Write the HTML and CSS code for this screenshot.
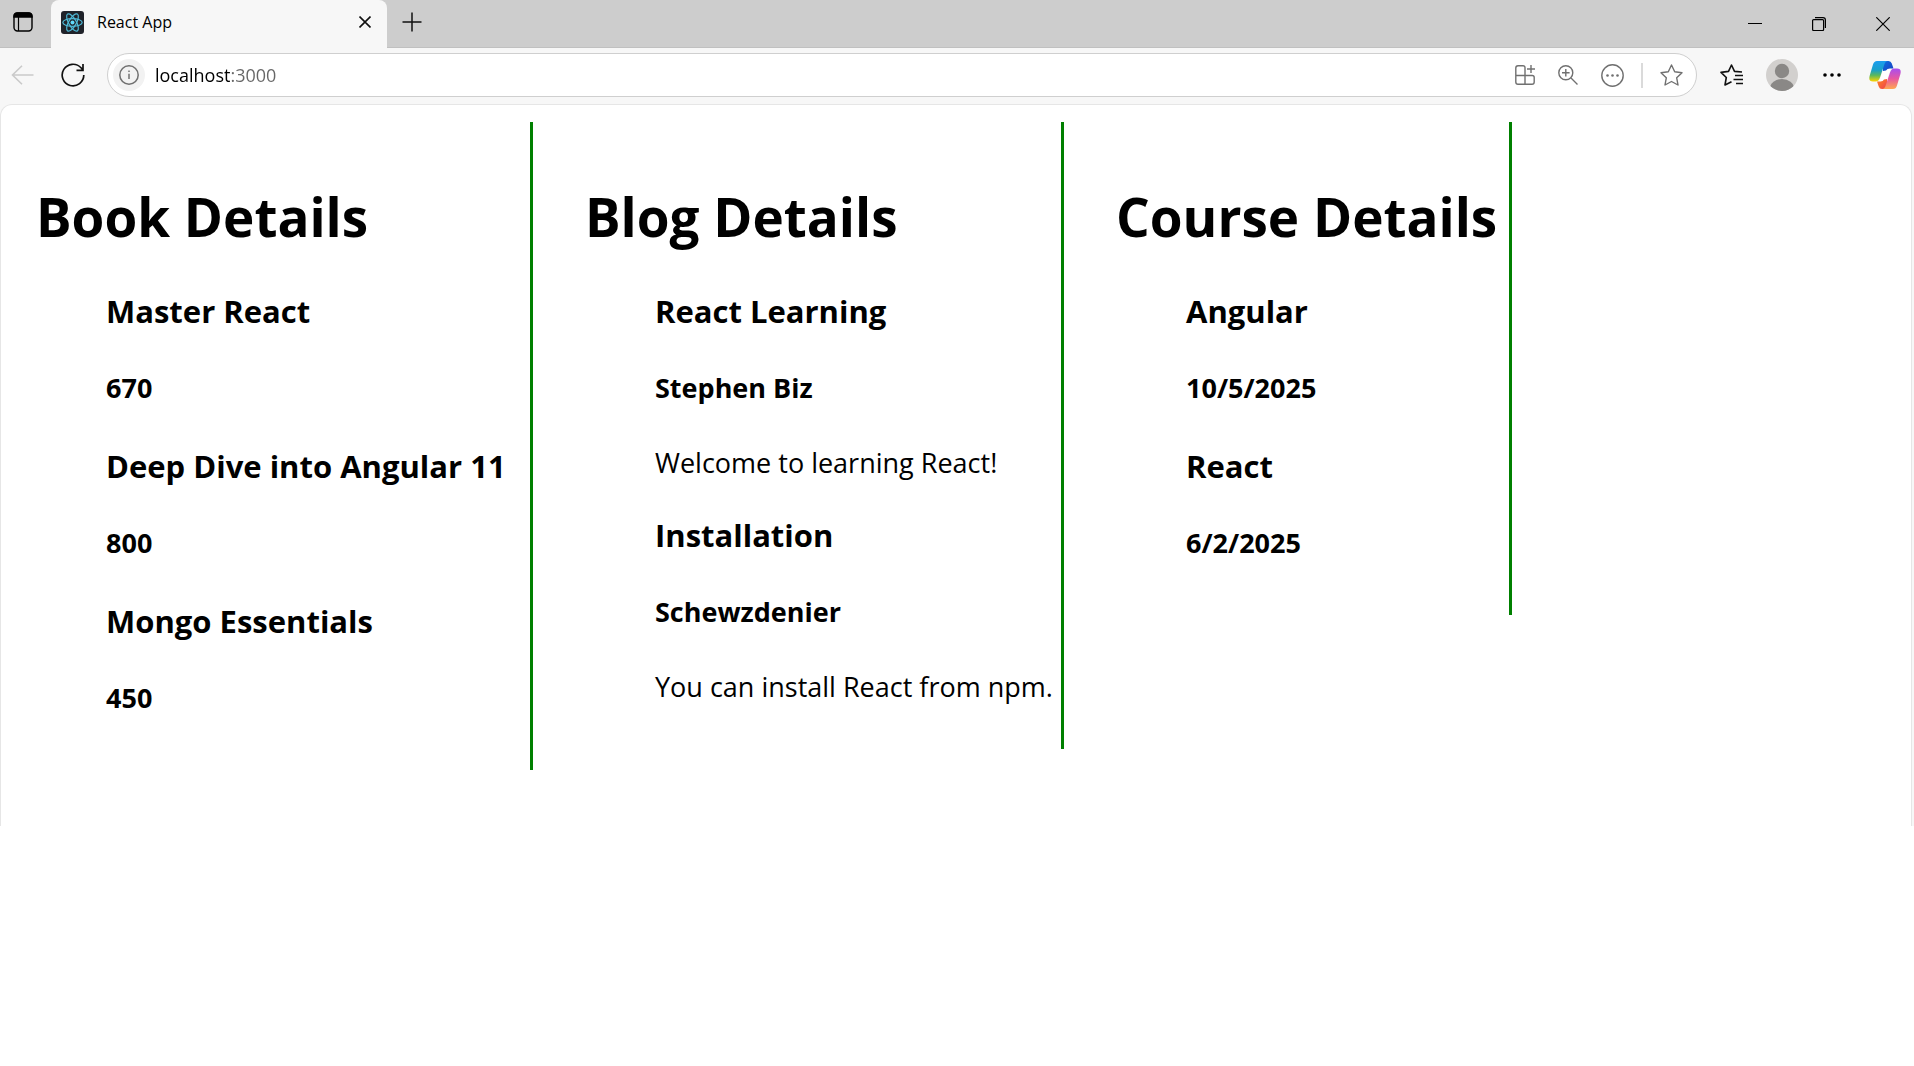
FILE: index.html
```html
<!DOCTYPE html>
<html lang="en">
<head>
<meta charset="utf-8">
<title>React App</title>
<link rel="stylesheet" href="styles.css">
</head>
<body>
<div class="browser">
  <header class="titlebar">
    <button class="icon-button workspace" type="button" aria-label="Tab actions">
      <svg width="20" height="20" viewBox="0 0 20 20" fill="none" stroke="#000" stroke-width="1.4"><rect x="1" y="1" width="18" height="18" rx="3.5"/><path d="M1 5V4.500Q1 1 4.500 1h11Q19 1 19 4.500V5H1z" fill="#000"/><path d="M5.500 5v14" stroke-width="1.200"/></svg>
    </button>
    <div class="tab">
      <svg class="favicon" width="23" height="23" viewBox="0 0 23 23"><rect width="23" height="23" rx="3" fill="#20232a"/><g fill="none" stroke="#4fb9d6" stroke-width="1.200"><ellipse cx="11.500" cy="11.500" rx="9.700" ry="3.800"/><ellipse cx="11.500" cy="11.500" rx="9.700" ry="3.800" transform="rotate(60 11.500 11.500)"/><ellipse cx="11.500" cy="11.500" rx="9.700" ry="3.800" transform="rotate(120 11.500 11.500)"/></g><circle cx="11.500" cy="11.500" r="2" fill="#61dafb"/></svg>
      <span class="tab-title">React App</span>
      <button class="icon-button" type="button" aria-label="Close tab">
        <svg width="12" height="12" viewBox="0 0 12 12" stroke="#111" stroke-width="1.600"><path d="M.5.5l11 11M11.500.5l-11 11"/></svg>
      </button>
    </div>
    <button class="icon-button new-tab" type="button" aria-label="New tab">
      <svg width="20" height="20" viewBox="0 0 20 20" stroke="#111" stroke-width="1.500"><path d="M10 .5v19M.5 10h19"/></svg>
    </button>
    <div class="window-controls">
      <button class="icon-button" type="button" aria-label="Minimize">
        <svg width="14" height="14" viewBox="0 0 14 14" stroke="#000"><path d="M0 6.500h14"/></svg>
      </button>
      <button class="icon-button" type="button" aria-label="Restore">
        <svg width="14" height="14" viewBox="0 0 14 14" fill="none" stroke="#000" stroke-width="1.200"><rect x=".6" y="2.600" width="11" height="11" rx="1"/><path d="M3 .6h8q2.400 0 2.400 2.400v8"/></svg>
      </button>
      <button class="icon-button" type="button" aria-label="Close window">
        <svg width="14" height="14" viewBox="0 0 14 14" stroke="#000" stroke-width="1.200"><path d="M.3.3l13.400 13.400M13.700.3L.3 13.700"/></svg>
      </button>
    </div>
  </header>

  <nav class="toolbar" aria-label="Browser toolbar">
    <button class="icon-button back" type="button" aria-label="Back" disabled>
      <svg width="23" height="20" viewBox="0 0 23 20" fill="none" stroke="#cacaca" stroke-width="1.600"><path d="M11 .8L1.500 10l9.500 9.200M1.500 10H22.500"/></svg>
    </button>
    <button class="icon-button reload" type="button" aria-label="Refresh">
      <svg width="24" height="24" viewBox="0 0 24 24" fill="none" stroke="#111" stroke-width="1.700"><path d="M22.800 12A10.800 10.800 0 1 1 20 4.800L22 7M22 1v6.300h-6.500"/></svg>
    </button>
    <form class="address">
      <button class="icon-button site-info" type="button" aria-label="Site information">
        <svg width="20" height="20" viewBox="0 0 20 20" fill="none" stroke="#707070" stroke-width="1.500"><circle cx="10" cy="10" r="9.200"/><path d="M10 8.800V14"/><circle cx="10" cy="6.200" r=".5" fill="#707070" stroke-width=".8"/></svg>
      </button>
      <input class="url" type="text" aria-label="Address" value="localhost:3000">
      <button class="icon-button" type="button" aria-label="Install app">
        <svg width="20" height="20" viewBox="0 0 20 20" fill="none" stroke="#707070" stroke-width="1.400"><path d="M10 10.500V2.800q0-2-2-2H3Q.8.8.8 3v14Q.8 19.200 3 19.200h14q2.200 0 2.200-2.200v-4.500q0-2-2-2H.8M10 10.500v8.700M16 0v8M12 4h8"/></svg>
      </button>
      <button class="icon-button" type="button" aria-label="Zoom">
        <svg width="20" height="20" viewBox="0 0 20 20" fill="none" stroke="#707070" stroke-width="1.400"><circle cx="7.800" cy="7.800" r="7"/><path d="M13 13l6.500 6.500M7.800 4v7.600M4 7.800h7.600"/></svg>
      </button>
      <button class="icon-button" type="button" aria-label="More page actions">
        <svg width="23" height="23" viewBox="0 0 23 23" fill="none" stroke="#707070" stroke-width="1.400"><circle cx="11.500" cy="11.500" r="10.700"/><g fill="#707070" stroke="none"><circle cx="6.500" cy="11.500" r="1.300"/><circle cx="11.500" cy="11.500" r="1.300"/><circle cx="16.500" cy="11.500" r="1.300"/></g></svg>
      </button>
      <span class="divider"></span>
      <button class="icon-button" type="button" aria-label="Add to favorites">
        <svg width="23" height="22" viewBox="0 0 23 22" fill="none" stroke="#707070" stroke-width="1.400" stroke-linejoin="round"><path d="M11.500 1l3.200 6.700 7.300 1-5.300 5.100 1.300 7.200-6.500-3.500L5 21l1.300-7.200L1 8.700l7.300-1z"/></svg>
      </button>
    </form>
    <button class="icon-button favorites" type="button" aria-label="Favorites">
      <svg width="23" height="22" viewBox="0 0 23 22" fill="none" stroke="#111" stroke-width="1.600" stroke-linejoin="round"><path d="M22 8l-7.500-.6L11.500 1l-3 6.400-7.500 1 5.300 5.100L5 21l6.500-3.300M15 11.500h8M13.500 15.500H23M16 19.500h7"/></svg>
    </button>
    <button class="icon-button" type="button" aria-label="Profile">
      <svg width="32" height="32" viewBox="0 0 32 32"><defs><clipPath id="avatar"><circle cx="16" cy="16" r="16"/></clipPath></defs><g clip-path="url(#avatar)"><path fill="#d2d0ce" d="M0 0h32v32H0z"/><circle cx="16" cy="12" r="7.200" fill="#8a8886"/><ellipse cx="16" cy="29.500" rx="12" ry="9.500" fill="#8a8886"/></g></svg>
    </button>
    <button class="icon-button more" type="button" aria-label="Settings and more">
      <svg width="18" height="4" viewBox="0 0 18 4"><circle cx="2" cy="2" r="1.800"/><circle cx="9" cy="2" r="1.800"/><circle cx="16" cy="2" r="1.800"/></svg>
    </button>
    <button class="icon-button copilot" type="button" aria-label="Copilot">
      <svg width="32" height="30" viewBox="0 0 32 30">
        <defs>
          <linearGradient id="cool" x1="0" y1="0" x2="0" y2="1"><stop offset="0" stop-color="#1b9df0"/><stop offset=".45" stop-color="#1aa0c8"/><stop offset=".7" stop-color="#5cb85c"/><stop offset="1" stop-color="#ffd400"/></linearGradient>
          <linearGradient id="warm" x1="0" y1="0" x2="0" y2="1"><stop offset="0" stop-color="#a84df0"/><stop offset=".5" stop-color="#e858a0"/><stop offset="1" stop-color="#ffa850"/></linearGradient>
          <linearGradient id="blue" x1="0" y1="0" x2="1" y2="1"><stop offset="0" stop-color="#0d6fe0"/><stop offset="1" stop-color="#1a3fc0"/></linearGradient>
          <linearGradient id="red" x1="0" y1="0" x2="1" y2="1"><stop offset="0" stop-color="#ff8a20"/><stop offset="1" stop-color="#ee3f50"/></linearGradient>
        </defs>
        <path fill="#fff" d="M15 8h7l-5 14h-7z"/>
        <path fill="url(#blue)" d="M14 1h5.500q2.500 0 3.300 2.500L24.500 8.500H21q-3 0-4 2l-3 .5z"/>
        <path fill="url(#red)" d="M18 29h-5q-2.500 0-3.300-2.500L8 21.500h3.500q2.500 0 3.500-2l3-.5z"/>
        <path fill="url(#cool)" d="M8 1h11q-2.500 0-3.500 3L11 17.500Q9.800 21.500 6.500 21.500H4Q-.8 21.500.6 16L4 4.500Q5 1 8 1z"/>
        <path fill="url(#warm)" d="M24 29H13q2.500 0 3.500-3L21 12.500Q22.200 8.500 25.500 8.500H28q4.800 0 3.400 5.500L28 25.500Q27 29 24 29z"/>
      </svg>
    </button>
  </nav>

  <main class="viewport">
    <section class="column">
      <h1>Book Details</h1>
      <div class="items">
        <h3>Master React</h3>
        <h4>670</h4>
        <h3>Deep Dive into Angular 11</h3>
        <h4>800</h4>
        <h3>Mongo Essentials</h3>
        <h4>450</h4>
      </div>
    </section>
    <section class="column column-blog">
      <h1>Blog Details</h1>
      <div class="items">
        <h3>React Learning</h3>
        <h4>Stephen Biz</h4>
        <p>Welcome to learning React!</p>
        <h3>Installation</h3>
        <h4>Schewzdenier</h4>
        <p>You can install React from npm.</p>
      </div>
    </section>
    <section class="column">
      <h1>Course Details</h1>
      <div class="items">
        <h3>Angular</h3>
        <h4>10/5/2025</h4>
        <h3>React</h3>
        <h4>6/2/2025</h4>
      </div>
    </section>
  </main>
</div>
</body>
</html>
```
FILE: styles.css
```css
* { box-sizing: border-box; }

body {
  margin: 0;
  background: #fff;
  color: #000;
  font-family: "Segoe UI", "Open Sans", "Noto Sans", sans-serif;
}

.browser { background: #f7f7f7; }

.icon-button {
  display: flex;
  align-items: center;
  justify-content: center;
  flex: none;
  padding: 0;
  border: 0;
  background: none;
}

.icon-button svg { display: block; }

/* Title bar */
.titlebar {
  display: flex;
  align-items: center;
  height: 48px;
  background: #cdcdcd;
  box-shadow: inset 0 -1px #c0c0c0;
}

.workspace { width: 51px; padding: 0 5px 4px 0; }

.tab {
  display: flex;
  align-items: center;
  align-self: flex-start;
  width: 336px;
  height: 48px;
  padding: 0 16px 4px 10px;
  background: #f7f7f7;
  border-radius: 8px 8px 0 0;
}

.tab-title {
  flex: 1;
  padding-left: 13px;
  font-size: 16px;
  line-height: 24px;
}

.new-tab { padding: 0 15px 4px; }

.window-controls {
  display: flex;
  gap: 50px;
  margin-left: auto;
  padding-right: 24px;
}

/* Toolbar */
.toolbar {
  display: flex;
  align-items: center;
  height: 56px;
  padding: 0 13px 2px 11px;
}

.reload { margin: 0 22px 0 27px; }

.address {
  display: flex;
  flex: 1;
  align-items: center;
  gap: 23px;
  height: 44px;
  padding: 0 13px 0 5px;
  background: #fff;
  border: 1px solid #cfcfcf;
  border-radius: 22px;
}

.site-info {
  width: 32px;
  height: 32px;
  margin-right: -13px;
  background: #f2f2f2;
  border-radius: 50%;
}

.url {
  flex: 1;
  min-width: 0;
  height: 28px;
  padding: 0;
  border: 0;
  outline: 0;
  background: linear-gradient(90deg, #000 76px, #666 76px);
  background-clip: text;
  color: transparent;
  font: inherit;
  font-size: 18px;
}

.divider {
  width: 2px;
  height: 25px;
  margin: 0 -6px;
  background: #dadada;
}

.favorites { margin: 0 23px; }

.more { margin: 0 28px 0 25px; }

/* Page shown in the browser */
.viewport {
  display: grid;
  grid-template-columns: minmax(0, 532fr) minmax(0, 531fr) minmax(0, 448fr) minmax(0, 399fr);
  align-items: start;
  min-height: 722px;
  margin-right: 2px;
  padding-top: 17px;
  background: #fff;
  border: solid #e6e6e6;
  border-width: 1px 1px 0;
  border-radius: 12px 12px 0 0;
}

.column {
  padding: 57px 0 16px 52px;
  border-right: 3px solid green;
  white-space: nowrap;
}

.column:first-child { padding-left: 35px; }

.column-blog { padding-bottom: 12px; }

.items { padding-left: 70px; }

h1 {
  margin: 0 0 34px;
  font-size: 53px;
  line-height: 76px;
}

h3 {
  margin: 0 0 36px;
  font-size: 31px;
  line-height: 44px;
}

h4 {
  margin: 0 0 37px;
  font-size: 27px;
  line-height: 38px;
}

p {
  margin: 0 0 31px;
  font-size: 27px;
  line-height: 38px;
}
```
